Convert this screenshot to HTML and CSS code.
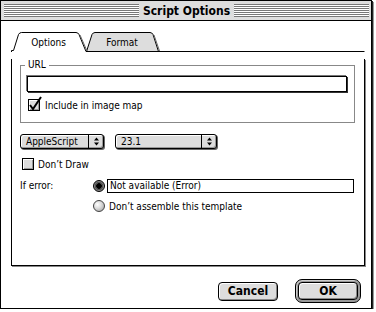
FILE: index.html
```html
<!DOCTYPE html>
<html lang="en">
<head>
  <meta charset="UTF-8">
  <title>Script Options</title>
  <link rel="stylesheet" href="styles.css">
</head>
<body>

  <div class="window">
    <div class="titlebar">
      <span class="stripes"></span>
      <span class="title">Script Options</span>
      <span class="stripes"></span>
    </div>

    <div class="content">
      <svg class="tabs" width="354" height="20" viewBox="0 0 354 20">
        <path class="tab-back" d="M75.5,19.5 L81,2.5 Q82,0.5 84,0.5 L139,0.5 Q141,0.5 142,2.5 L147.5,19.5 Z"/>
        <path class="tab-line" d="M0.5,20 L0.5,18.5 L2.5,18.5 L7.5,2.5 Q8.5,0.5 10.5,0.5 L65,0.5 Q67,0.5 68,2.5 L75,19.5 L353.5,19.5"/>
        <path class="tab-shade" d="M69,3 L76,19"/>
        <path class="tab-shade" d="M143,3 L148.5,19"/>
        <text class="tab-label" x="37.5" y="14">Options</text>
        <text class="tab-label" x="111" y="14">Format</text>
      </svg>

      <div class="pane">
        <fieldset class="group">
          <legend>URL</legend>
          <div class="field field-url"></div>
          <div class="check-row">
            <span class="checkbox">
              <svg width="12" height="12" viewBox="0 0 12 12"><path d="M2,6 L5,10 L13,-2" fill="none" stroke="#000" stroke-width="2"/></svg>
            </span>
            <span>Include in image map</span>
          </div>
        </fieldset>

        <div class="popups">
          <div class="popup popup-lang">
            <span class="popup-text">AppleScript</span>
            <span class="popup-arrows">
              <svg width="5" height="9" viewBox="0 0 5 9"><path d="M0,3.5 L2.5,0.5 L5,3.5 Z M0,5.5 L2.5,8.5 L5,5.5 Z" fill="#000"/></svg>
            </span>
          </div>
          <div class="popup popup-ver">
            <span class="popup-text">23.1</span>
            <span class="popup-arrows">
              <svg width="5" height="9" viewBox="0 0 5 9"><path d="M0,3.5 L2.5,0.5 L5,3.5 Z M0,5.5 L2.5,8.5 L5,5.5 Z" fill="#000"/></svg>
            </span>
          </div>
        </div>

        <div class="check-row draw-row">
          <span class="checkbox"></span>
          <span>Don’t Draw</span>
        </div>

        <div class="error-row">
          <span class="error-label">If error:</span>
          <div class="error-options">
            <div class="radio-row">
              <span class="radio on"></span>
              <div class="field field-error">Not available (Error)</div>
            </div>
            <div class="radio-row second">
              <span class="radio"></span>
              <span>Don’t assemble this template</span>
            </div>
          </div>
        </div>
      </div>

      <div class="buttons">
        <button class="btn btn-cancel">Cancel</button>
        <div class="default-ring">
          <button class="btn btn-ok">OK</button>
        </div>
      </div>
    </div>
  </div>

</body>
</html>
```

FILE: styles.css
```css
body {
  margin: 0;
  background: #fff;
  font-family: "DejaVu Sans Condensed", "DejaVu Sans", sans-serif;
  font-stretch: condensed;
  font-size: 10px;
  color: #000;
}
.window {
  width: 372px;
  height: 309px;
  box-sizing: border-box;
  border: 1px solid #000;
  box-shadow: 1px 1px 0 #222, 2px 2px 0 #999;
  background: #fff;
}
.titlebar {
  height: 20px;
  box-sizing: border-box;
  border-bottom: 1px solid #000;
  background: #ddd;
  display: flex;
  align-items: center;
  gap: 4px;
  padding: 0 2px 0 3px;
}
.stripes {
  flex: 1;
  height: 13px;
  background: repeating-linear-gradient(to bottom, #777 0 1px, #fff 1px 2px);
}
.title {
  font-weight: bold;
  font-size: 12px;
}
.content {
  padding: 11px 6px 0 10px;
}
.tabs {
  display: block;
}
.tab-back {
  fill: #ddd;
  stroke: #000;
}
.tab-line {
  fill: none;
  stroke: #000;
}
.tab-shade {
  stroke: #666;
  fill: none;
}
.tab-label {
  font-family: "DejaVu Sans Condensed", "DejaVu Sans", sans-serif;
  font-stretch: condensed;
  font-size: 10px;
  text-anchor: middle;
}
.pane {
  width: 354px;
  height: 207px;
  box-sizing: border-box;
  border: 1px solid #000;
  border-top: none;
  box-shadow: 1px 1px 0 #888;
}
.group {
  margin: 7px 9px 0 8px;
  padding: 0 7px 11px 6px;
  border: 1px solid #888;
  min-width: 0;
}
.group legend {
  padding: 0 3px;
  margin-left: -2px;
  line-height: 12px;
}
.field {
  box-sizing: border-box;
  border: 1px solid #000;
  background: #fff;
}
.field-url {
  margin-top: 5px;
  height: 16px;
  box-shadow: -1px -1px 0 #777, 1px 1px 0 #333;
}
.check-row {
  display: flex;
  align-items: center;
  gap: 5px;
  height: 12px;
  margin-top: 7px;
  margin-left: 1px;
}
.checkbox {
  width: 12px;
  height: 12px;
  box-sizing: border-box;
  border: 1px solid #000;
  background: #ddd;
  box-shadow: inset 1px 1px 0 #fff, inset -1px -1px 0 #999;
}
.checkbox svg {
  display: block;
  overflow: visible;
  margin: -1px 0 0 -1px;
}
.popups {
  display: flex;
  gap: 11px;
  margin: 11px 0 0 8px;
}
.popup {
  height: 15px;
  box-sizing: border-box;
  border: 1px solid #000;
  border-radius: 3px;
  background: #ddd;
  box-shadow: inset 1px 1px 0 #fff, inset -1px -1px 0 #999, 1px 1px 0 #666;
  display: flex;
}
.popup-lang {
  width: 84px;
}
.popup-ver {
  width: 102px;
}
.popup-text {
  flex: 1;
  padding-left: 5px;
  line-height: 13px;
}
.popup-arrows {
  width: 14px;
  border-left: 1px solid #000;
  display: flex;
  align-items: center;
  justify-content: center;
}
.popup-arrows svg {
  display: block;
}
.draw-row {
  margin: 9px 0 0 10px;
  gap: 4px;
}
.error-row {
  display: flex;
  margin: 9px 10px 0 8px;
}
.error-label {
  width: 73px;
  line-height: 14px;
}
.error-options {
  flex: 1;
}
.radio-row {
  display: flex;
  align-items: center;
  gap: 2px;
  height: 14px;
}
.radio-row.second {
  margin-top: 7px;
  gap: 4px;
  height: 12px;
}
.radio {
  width: 12px;
  height: 12px;
  box-sizing: border-box;
  border-radius: 50%;
  border: 1px solid #444;
  background: radial-gradient(circle at 35% 35%, #fff 0, #ddd 40%, #999 100%);
}
.radio.on {
  border-color: #000;
  background: radial-gradient(circle, #000 0 2.5px, #555 3px 4px, #888 4.5px);
}
.field-error {
  flex: 1;
  height: 14px;
  padding-left: 2px;
  line-height: 12px;
}
.buttons {
  display: flex;
  justify-content: flex-end;
  align-items: center;
  gap: 17px;
  margin-top: 13px;
  padding-right: 4px;
}
.btn {
  font-family: "DejaVu Sans Condensed", "DejaVu Sans", sans-serif;
  font-stretch: condensed;
  font-weight: bold;
  font-size: 12px;
  height: 19px;
  padding: 0;
  border: 1px solid #000;
  border-radius: 4px;
  background: #ddd;
  box-shadow: inset 1px 1px 0 #fff, inset -1px -1px 0 #888;
  color: #000;
}
.btn-cancel {
  width: 60px;
}
.default-ring {
  border: 1px solid #000;
  border-radius: 7px;
  padding: 2px;
  background: #999;
  box-shadow: inset 1px 1px 0 #ccc;
  display: flex;
}
.btn-ok {
  width: 60px;
  height: 18px;
}
```
